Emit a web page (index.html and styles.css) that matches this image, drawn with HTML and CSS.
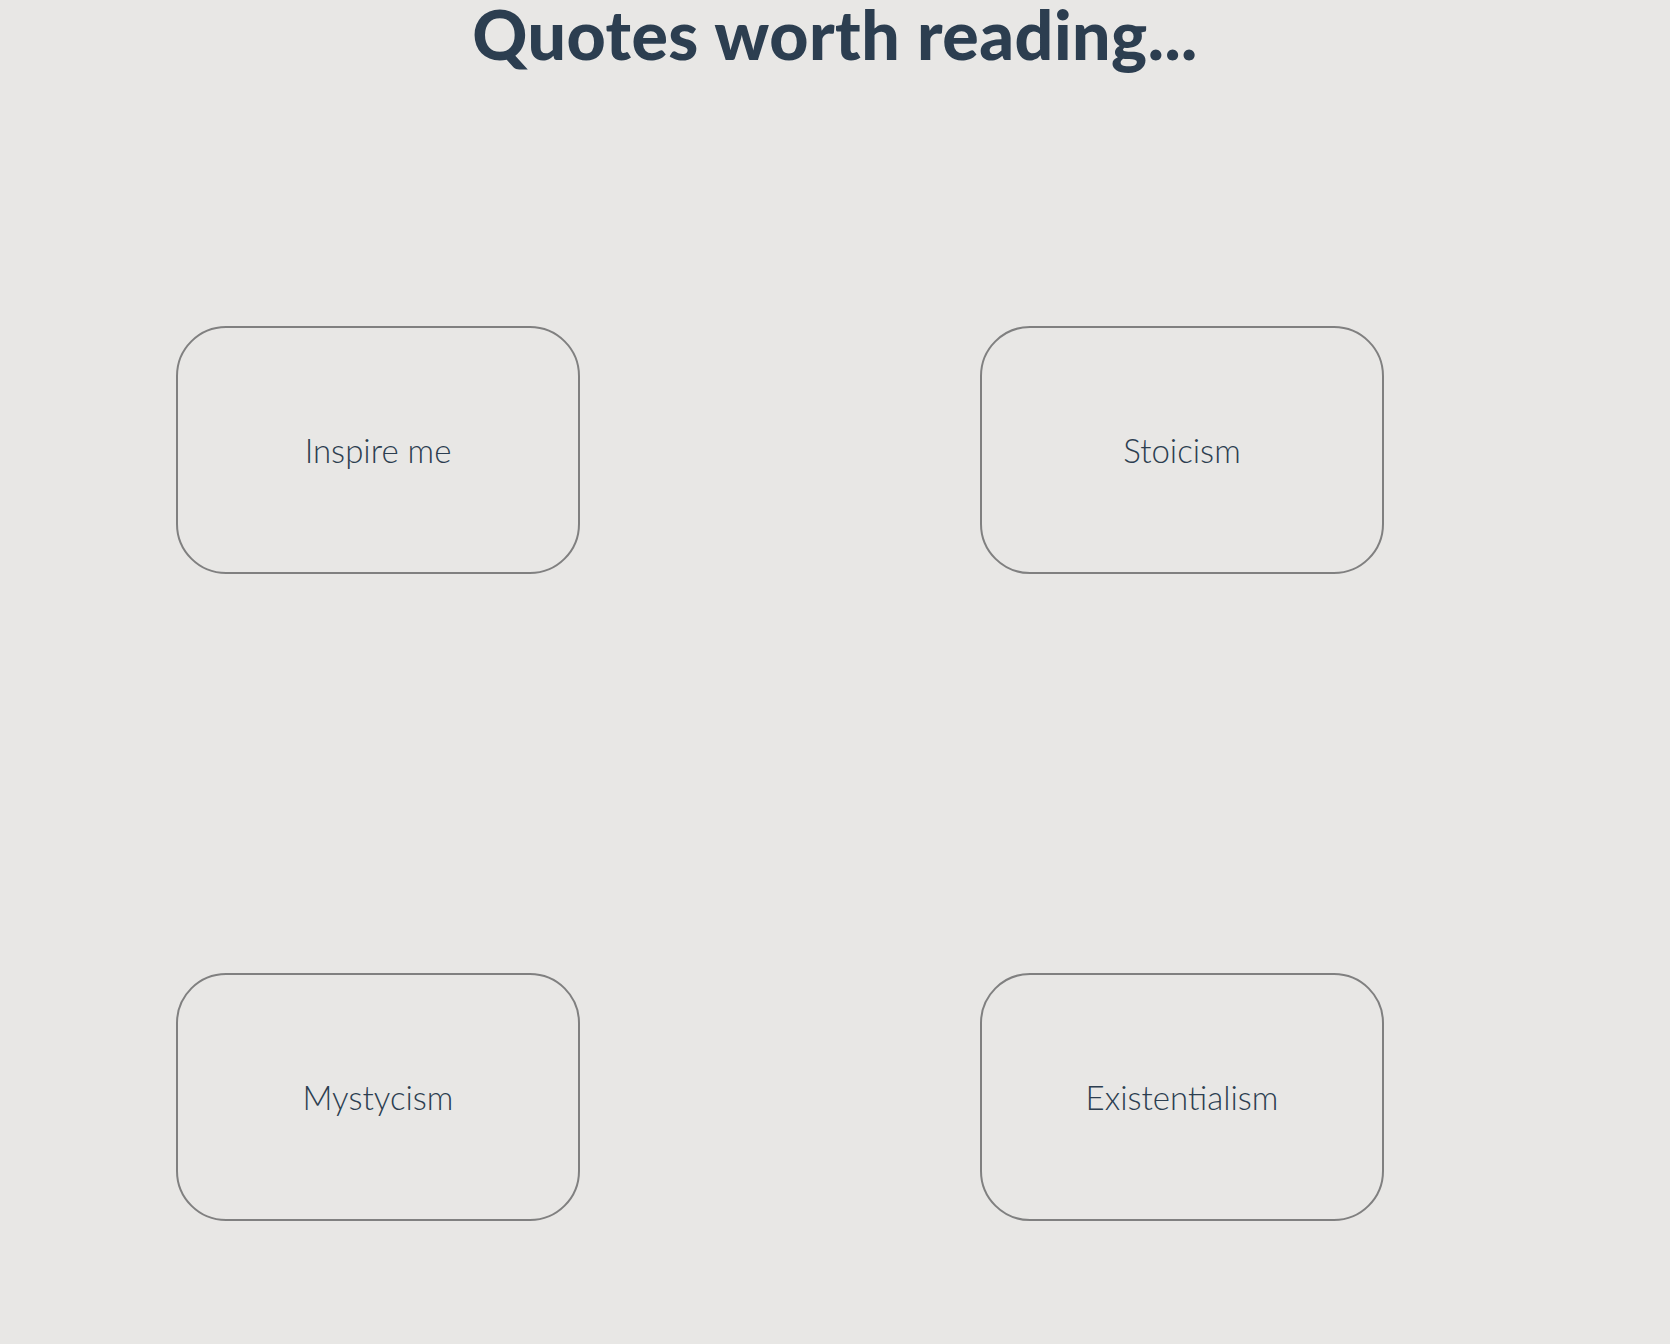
FILE: index.html
```html
<!DOCTYPE html>
<html lang="en">
<head>
<meta charset="utf-8">
<title>Quotes worth reading</title>
<link rel="stylesheet" href="styles.css">
</head>
<body>
  <h1 class="title">Quotes worth reading...</h1>
  <main class="grid">
    <button class="card">Inspire me</button>
    <button class="card">Stoicism</button>
    <button class="card">Mystycism</button>
    <button class="card">Existentialism</button>
  </main>
</body>
</html>
```
FILE: styles.css
```css
html, body {
  margin: 0;
  padding: 0;
  background: #e8e7e5;
}
body {
  font-family: "Lato", "Noto Sans", sans-serif;
  color: #2c3e50;
  min-height: 1344px;
}
.title {
  margin: 0;
  padding-top: 0;
  text-align: center;
  font-size: 68px;
  font-weight: 900;
  letter-spacing: 0.5px;
  line-height: 68px;
  color: #2c3e50;
}
.grid {
  display: grid;
  grid-template-columns: 404px 404px;
  column-gap: 400px;
  row-gap: 399px;
  padding-left: 176px;
  margin-top: 258px;
}
.card {
  box-sizing: border-box;
  width: 404px;
  height: 248px;
  border: 2px solid #808080;
  border-radius: 50px;
  background: transparent;
  font-family: "Lato", "Noto Sans", sans-serif;
  font-size: 33px;
  font-weight: 300;
  color: #2c3e50;
  cursor: pointer;
  padding: 0;
}
```
